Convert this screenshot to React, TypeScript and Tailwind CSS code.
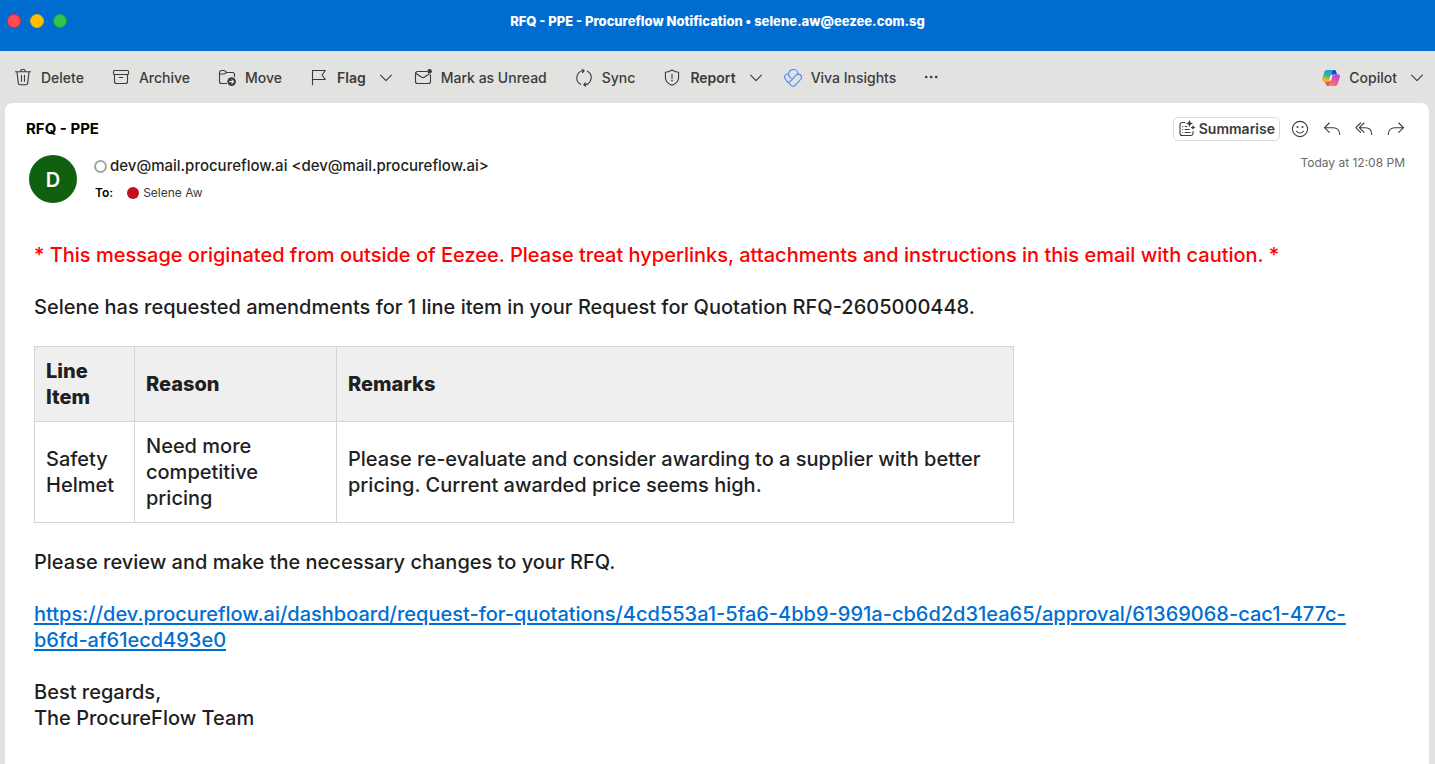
import React from 'react';

type ToolItem = {
    label: string;
    icon: React.ReactNode;
    menu?: boolean;
};

const toolItems: ToolItem[] = [
    { label: 'Delete', icon: <TrashIcon /> },
    { label: 'Archive', icon: <ArchiveIcon /> },
    { label: 'Move', icon: <MoveIcon /> },
    { label: 'Flag', icon: <FlagIcon />, menu: true },
    { label: 'Mark as Unread', icon: <UnreadIcon /> },
    { label: 'Sync', icon: <SyncIcon /> },
    { label: 'Report', icon: <ReportIcon />, menu: true },
    { label: 'Viva Insights', icon: <VivaIcon /> },
];

const lineItems = [
    {
        item: 'Safety Helmet',
        reason: 'Need more competitive pricing',
        remarks: 'Please re-evaluate and consider awarding to a supplier with better pricing. Current awarded price seems high.',
    },
];

const rfqLink =
    'https://dev.procureflow.ai/dashboard/request-for-quotations/4cd553a1-5fa6-4bb9-991a-cb6d2d31ea65/approval/61369068-cac1-477c-b6fd-af61ecd493e0';

export default function App() {
    return (
        <div className="flex flex-col min-h-screen bg-[#e2e2e0] font-['Inter',sans-serif] text-[#1f1f1f]">
            <TitleBar />
            <Toolbar />
            <main className="flex-1 ml-[5px] mr-[6px] rounded-t-lg bg-white">
                <MessageHeader />
                <MessageBody />
            </main>
        </div>
    );
}

function TitleBar() {
    return (
        <header className="grid grid-cols-[1fr_auto_1fr] items-center h-[51px] px-[7px] pb-[9px] bg-[#006cd0]">
            <div className="flex gap-[9px]">
                <button aria-label="Close" className="size-[14px] rounded-full bg-[#ff4b55] border border-[#ee2433]" />
                <button aria-label="Minimise" className="size-[14px] rounded-full bg-[#fcc000] border border-[#e5ae0c]" />
                <button aria-label="Zoom" className="size-[14px] rounded-full bg-[#32c24d] border border-[#18a535]" />
            </div>
            <h1 className="text-[13px] leading-4 font-extrabold text-white">
                RFQ - PPE - Procureflow Notification • selene.aw@eezee.com.sg
            </h1>
        </header>
    );
}

function Toolbar() {
    return (
        <nav className="flex items-center h-[52px] pt-px pl-[14px] pr-3 text-sm font-medium text-[#3b3b3b]">
            <div className="flex items-center gap-[22px]">
                {toolItems.map((tool) => (
                    <ToolButton key={tool.label} {...tool} />
                ))}
                <button aria-label="More" className="w-4">
                    <svg viewBox="0 0 16 16" className="size-4" fill="currentColor">
                        <circle cx="2.2" cy="7" r="1.3" />
                        <circle cx="7.2" cy="7" r="1.3" />
                        <circle cx="12.2" cy="7" r="1.3" />
                    </svg>
                </button>
            </div>
            <button className="flex items-center ml-auto">
                <CopilotIcon />
                <span className="ml-[9px] mr-[14px]">Copilot</span>
                <Chevron />
            </button>
        </nav>
    );
}

function ToolButton({ label, icon, menu }: ToolItem) {
    return (
        <button className={`flex items-center gap-[9px] whitespace-nowrap ${menu ? 'font-semibold' : 'pr-[6px]'}`}>
            {icon}
            <span className={menu ? 'mr-[5px]' : ''}>{label}</span>
            {menu && <Chevron />}
        </button>
    );
}

function MessageHeader() {
    return (
        <section className="pt-[14px] pl-[21px] pr-6">
            <div className="flex items-center justify-between">
                <h2 className="text-[15px] leading-5 font-bold text-black">RFQ - PPE</h2>
                <div className="flex items-center gap-[14px] text-[#3b3b3b]">
                    <button className="flex items-center gap-[3px] h-6 px-1 mr-[-3px] rounded-[5px] border border-[#dcdcdc] text-sm font-semibold">
                        <SummariseIcon />
                        Summarise
                    </button>
                    <button aria-label="React"><SmileIcon /></button>
                    <button aria-label="Reply"><ReplyIcon /></button>
                    <button aria-label="Reply all"><ReplyAllIcon /></button>
                    <button aria-label="Forward"><ForwardIcon /></button>
                </div>
            </div>

            <div className="flex items-start mt-[14px] pl-[3px]">
                <div className="flex items-center justify-center size-12 pt-px rounded-full bg-[#10610f] text-xl font-semibold text-white">
                    D
                </div>
                <div className="ml-[17px]">
                    <div className="flex items-center gap-[3px]">
                        <span className="size-[13px] rounded-full border-2 border-[#a6a6a6]" />
                        <span className="text-[15px] leading-[22px] font-medium">
                            dev@mail.procureflow.ai &lt;dev@mail.procureflow.ai&gt;
                        </span>
                    </div>
                    <div className="flex items-center mt-2 pl-[1px] text-xs">
                        <span className="font-semibold text-black">To:</span>
                        <span className="size-3 ml-[14px] mr-1 rounded-full bg-[#c10f1f]" />
                        <span className="text-[#3b3b3b]">Selene Aw</span>
                    </div>
                </div>
                <time className="ml-auto text-xs text-[#6b6966]">Today at 12:08 PM</time>
            </div>
        </section>
    );
}

function MessageBody() {
    return (
        <article className="pt-[39px] pl-[29px] pr-10 pb-8 text-[20px] leading-[26px] font-medium">
            <p className="text-[#ff0000]">
                * This message originated from outside of Eezee. Please treat hyperlinks, attachments and instructions in this email with caution. *
            </p>
            <p className="mt-[26px]">
                Selene has requested amendments for 1 line item in your Request for Quotation RFQ-2605000448.
            </p>

            <table className="table-fixed mt-[26px] w-full max-w-[980px] border-collapse text-left">
                <colgroup>
                    <col className="w-[100px]" />
                    <col className="w-[202px]" />
                    <col />
                </colgroup>
                <thead className="bg-[#efefef]">
                    <tr>
                        {['Line Item', 'Reason', 'Remarks'].map((heading) => (
                            <th key={heading} className="p-[11px] border border-[#d4d4d4] font-extrabold">
                                {heading}
                            </th>
                        ))}
                    </tr>
                </thead>
                <tbody>
                    {lineItems.map((row) => (
                        <tr key={row.item}>
                            <td className="p-[11px] border border-[#d4d4d4]">{row.item}</td>
                            <td className="p-[11px] border border-[#d4d4d4]">{row.reason}</td>
                            <td className="p-[11px] border border-[#d4d4d4]">{row.remarks}</td>
                        </tr>
                    ))}
                </tbody>
            </table>

            <p className="mt-[26px]">Please review and make the necessary changes to your RFQ.</p>
            <p className="mt-[26px]">
                <a href={rfqLink} className="text-[#006fd1] underline underline-offset-2 decoration-2">
                    {rfqLink}
                </a>
            </p>
            <p className="mt-[26px]">
                Best regards,
                <br />
                The ProcureFlow Team
            </p>
        </article>
    );
}

function Icon({ children, className = '' }: { children: React.ReactNode; className?: string }) {
    return (
        <svg
            viewBox="0 0 18 18"
            className={`size-[18px] shrink-0 ${className}`}
            fill="none"
            stroke="currentColor"
            strokeWidth="1.1"
            strokeLinecap="round"
            strokeLinejoin="round"
        >
            {children}
        </svg>
    );
}

function Chevron() {
    return (
        <svg viewBox="0 0 12 12" className="size-3 shrink-0" fill="none" stroke="currentColor" strokeWidth="1.1" strokeLinecap="round" strokeLinejoin="round">
            <path d="M.6 3.2 6 8.7l5.4-5.5" />
        </svg>
    );
}

function TrashIcon() {
    return (
        <Icon>
            <path d="M1.5 2.7h15M6.7 2.5a2.3 2.3 0 0 1 4.6 0M3 2.9l1.3 11.2a1.8 1.8 0 0 0 1.8 1.6h5.8a1.8 1.8 0 0 0 1.8-1.6L15 2.9M7.5 6.2v6M10.5 6.2v6" />
        </Icon>
    );
}

function ArchiveIcon() {
    return (
        <Icon>
            <rect x="1.5" y="1.5" width="15" height="4" rx="1" />
            <path d="M2.5 5.5v7a2 2 0 0 0 2 2h9a2 2 0 0 0 2-2v-7M7.3 8.5h3.4" />
        </Icon>
    );
}

function MoveIcon() {
    return (
        <Icon>
            <path d="M8.5 14.5h-5a2 2 0 0 1-2-2v-9a2 2 0 0 1 2-2h2.4c.6 0 1 .2 1.4.6l1.2 1.4h6a2 2 0 0 1 2 2v2M1.7 5h4.1c.7 0 1.1-.2 1.5-.6l1.2-1" />
            <circle cx="13.6" cy="12.6" r="4.3" fill="currentColor" stroke="none" />
            <path d="M11.6 12.6h3.8M13.9 10.9l1.7 1.7-1.7 1.7" stroke="#e2e2e0" />
        </Icon>
    );
}

function FlagIcon() {
    return (
        <Icon>
            <path d="M2.5 15.8V1.5h12.8L12.1 6l3.2 4.5H2.5" />
        </Icon>
    );
}

function UnreadIcon() {
    return (
        <Icon>
            <path d="M12.5 2.5h-9a2 2 0 0 0-2 2v8a2 2 0 0 0 2 2h11a2 2 0 0 0 2-2V5.8M1.7 4.3l6.1 3.9c.8.5 1.6.5 2.4 0l5-3.2" />
            <circle cx="15.6" cy="2.3" r="2.3" fill="currentColor" stroke="none" />
        </Icon>
    );
}

function SyncIcon() {
    return (
        <Icon>
            <path d="M5.6 15.3A7.3 7.3 0 0 1 8 1.7h1.2M7.2.5l2 1.2-1.5 2M12.4 2.3A7.3 7.3 0 0 1 10 15.9H8.8M10.800 17.2l-2-1.3 1.5-2" />
        </Icon>
    );
}

function ReportIcon() {
    return (
        <Icon>
            <path d="M9 1c2 1.5 4 2 6.6 2.2v5.3c0 3.9-2.6 6.3-6.6 7.8-4-1.5-6.6-3.9-6.6-7.8V3.2C5 3 7 2.5 9 1ZM9 5.2v4.2" />
            <circle cx="9" cy="11.6" r=".8" fill="currentColor" stroke="none" />
        </Icon>
    );
}

// three interlocking loops: one on top, one to the lower left, one to the right
function VivaIcon() {
    return (
        <Icon className="text-[#4a86fb]">
            <path d="M7.1 9.2 5.6 7.6C4.4 6.3 4.3 4.400 5.1 2.900 6 1.200 7.600.500 9.400.500c2.700 0 4.600 2 4.600 4.500" />
            <path d="M4.700 5.200C3.300 4.700 1.700 5.300 1 6.700c-.7 1.400-.4 2.800.6 3.800l5.100 5.700c1.300 1.400 3.300 1.400 4.600 0l5.300-5.700c1.100-1.200 1.100-3.300-.1-4.500-1.200-1.200-3.200-1.200-4.400.1L6.400 12.300c-.9.900-2.300 1.100-3.300.4" />
        </Icon>
    );
}

function SummariseIcon() {
    return (
        <Icon>
            <path d="M7 2.5H4.300a2.300 2.300 0 0 0-2.300 2.300v8.400a2.300 2.300 0 0 0 2.300 2.300h8.400a2.300 2.300 0 0 0 2.300-2.300V11.500M4.700 6.500h.1M4.700 9.500h.1M4.700 12.500h.1M7.200 6.500h1.500M7.200 9.500h4M7.200 12.500h5" />
            <path d="M11.5 0l1.100 2.400L15 3.500l-2.400 1.100L11.5 7l-1.100-2.400L8 3.500l2.400-1.100ZM15 5l.8 1.700 1.700.8-1.700.8L15 10l-.8-1.700-1.700-.8 1.700-.8Z" fill="currentColor" stroke="none" />
        </Icon>
    );
}

function SmileIcon() {
    return (
        <Icon>
            <circle cx="9" cy="9" r="7.6" />
            <path d="M5.6 11.2c1.6 2.400 5.200 2.400 6.800 0" />
            <circle cx="6.5" cy="7" r="1" fill="currentColor" stroke="none" />
            <circle cx="11.5" cy="7" r="1" fill="currentColor" stroke="none" />
        </Icon>
    );
}

function ReplyIcon() {
    return (
        <Icon>
            <path d="M6.3 3 1.4 7.7l4.900 4.700M1.6 7.7h8.6c3.6 0 6.400 2.600 6.500 6.700" />
        </Icon>
    );
}

function ReplyAllIcon() {
    return (
        <Icon>
            <path d="M5.6 3 .9 7.7l4.700 4.700M9 3 4.300 7.700 9 12.400M4.500 7.700h6c3.600 0 6.100 2.600 6.200 6.700" />
        </Icon>
    );
}

function ForwardIcon() {
    return (
        <Icon>
            <path d="M11.7 3l4.900 4.700-4.900 4.700M16.4 7.700H7.800c-3.600 0-6.400 2.600-6.500 6.700" />
        </Icon>
    );
}

function CopilotIcon() {
    return (
        <svg viewBox="0 0 18 18" className="size-[18px] shrink-0">
            <defs>
                <linearGradient id="copilot-left" x1=".4" y1="0" x2=".2" y2="1">
                    <stop offset="0" stopColor="#1b9be8" />
                    <stop offset=".5" stopColor="#48b877" />
                    <stop offset=".8" stopColor="#e8c21c" />
                    <stop offset="1" stopColor="#ffa02c" />
                </linearGradient>
                <linearGradient id="copilot-right" x1=".8" y1="0" x2=".2" y2="1">
                    <stop offset="0" stopColor="#a44be8" />
                    <stop offset=".5" stopColor="#e557a6" />
                    <stop offset="1" stopColor="#ff8a3f" />
                </linearGradient>
            </defs>
            <path d="M9 1h3.4c1 0 1.5.6 1.800 1.500l.8 2.700h-3.200c-1 0-1.500.6-1.800 1.500Z" fill="#1249c4" />
            <path d="M5.200 1H12c-.9.2-1.400.9-1.700 1.900L8 10.700c-.4 1.400-1 2.100-2.400 2.100H2.300C.5 12.800-.2 11.500.3 9.800l2-6.700C2.700 1.700 3.700 1 5.200 1Z" fill="url(#copilot-left)" />
            <path d="M3 12.800h2.600c1.400 0 2-.7 2.400-2.100l.3-1 .7 6.300c-.2.600-.7 1-1.500 1H5.700c-1 0-1.500-.6-1.800-1.500Z" fill="#f4505e" />
            <path d="M12.800 17H6c.9-.2 1.400-.9 1.700-1.900L10 7.300c.4-1.400 1-2.100 2.400-2.100h3.300c1.800 0 2.500 1.300 2 3l-2 6.700c-.4 1.400-1.400 2.100-2.900 2.100Z" fill="url(#copilot-right)" />
            <path d="M8.400 6.500h2l-1.500 5H7Z" fill="#fff" opacity=".85" />
        </svg>
    );
}
